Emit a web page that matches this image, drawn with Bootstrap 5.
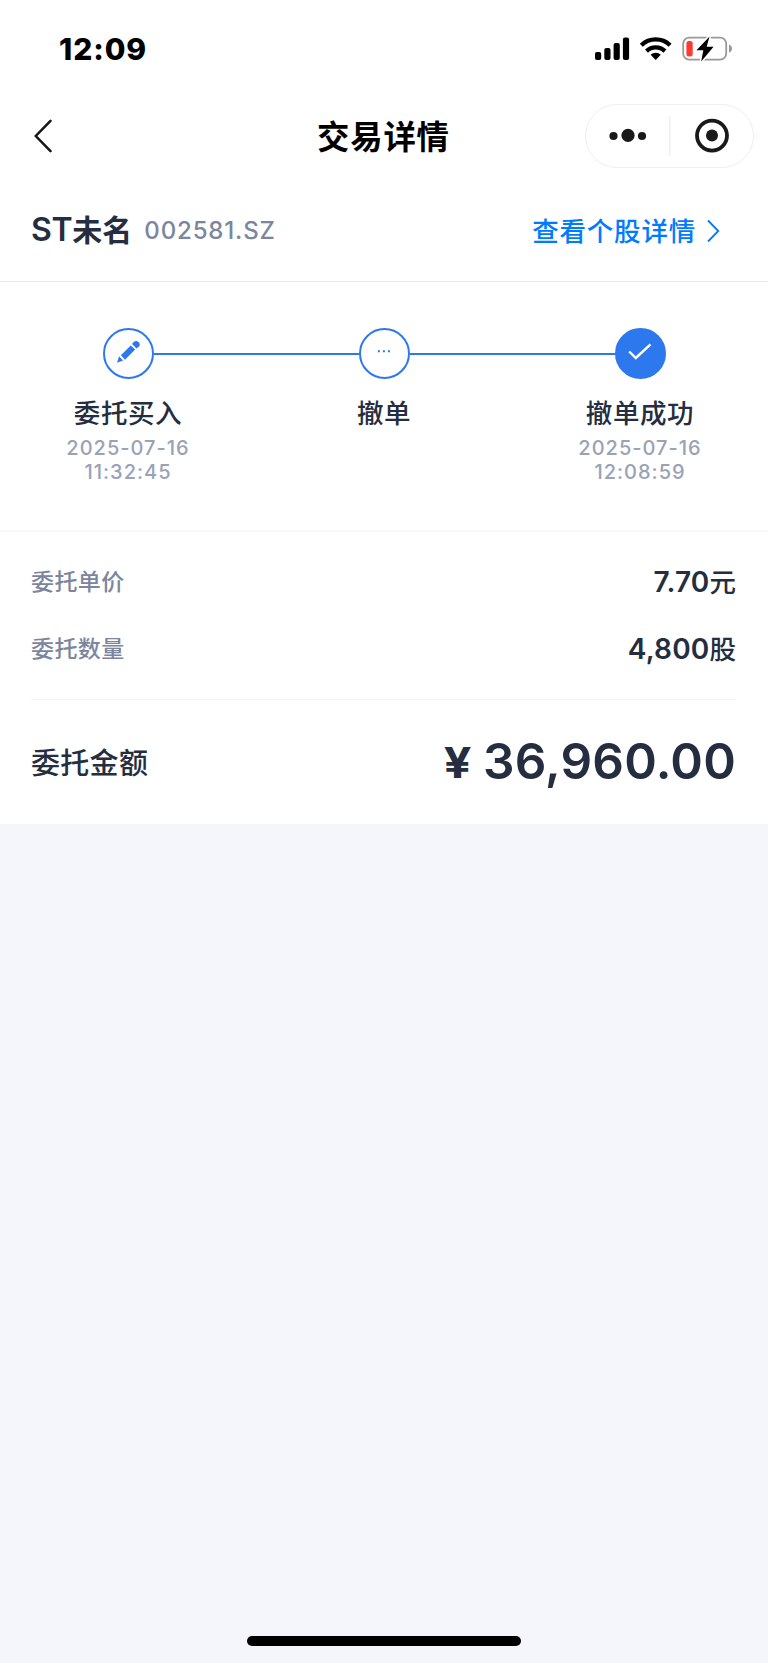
<!DOCTYPE html>
<html lang="zh-CN">
<head>
<meta charset="utf-8">
<meta name="viewport" content="width=device-width, initial-scale=1">
<title>交易详情</title>
<link href="https://cdn.jsdelivr.net/npm/bootstrap@5.3.0/dist/css/bootstrap.min.css" rel="stylesheet">
<style>
  :root { --ink: #252d40; --muted: #7b869e; --faint: #9aa2b6; --accent: #2e78ee; --link: #007aff; }
  body { font-family: Inter, "Noto Sans CJK SC", sans-serif; background: #f4f6fb; color: var(--ink); min-height: 1663px; }
  svg { display: block; flex: none; }
  .status-bar { height: 98px; padding: 0 35px 0 59px; color: #000; }
  .clock { font-size: 30px; font-weight: 800; line-height: 1; letter-spacing: .9px; }
  .title-bar { height: 76px; padding: 0 14px 0 34px; display: grid; grid-template-columns: 264px 1fr 264px; }
  .page-title { font-size: 32.4px; font-weight: 700; letter-spacing: .8px; color: #000; line-height: 1; padding: 5px 0 0 19px; }
  .capsule { width: 169px; height: 64px; border: 1px solid #efefef; border-radius: 32px; }
  .stock-row { height: 108px; padding: 5px 46px 0 31px; border-bottom: 1px solid #ebebeb; }
  .stock-name { font-size: 30px; font-weight: 600; line-height: 1; padding-bottom: 1px; }
  .stock-name .latin { font-size: 32px; letter-spacing: -.3px; }
  .stock-code { font-size: 24px; font-weight: 500; color: var(--muted); letter-spacing: .85px; line-height: 1; margin-left: 12px; padding-top: 1px; }
  .detail-link { font-size: 26.5px; font-weight: 500; color: var(--link); letter-spacing: .8px; line-height: 1; padding-top: 2px; }
  .steps { height: 250px; padding-top: 46px; border-bottom: 2px solid #f7f8fa; }
  .step-dot { width: 51px; height: 51px; border: 2px solid var(--accent); border-radius: 50%; flex: none; }
  .step-dot.done { background: var(--accent); }
  .rail { flex: 1; height: 2px; background: var(--accent); }
  .rail.off { background: transparent; }
  .step-name { font-size: 26.5px; font-weight: 500; letter-spacing: .6px; line-height: 36px; margin-top: 16px; }
  .step-time { font-size: 20px; font-weight: 500; color: var(--faint); letter-spacing: 1px; line-height: 24px; margin-top: 5px; }
  .info { padding: 16px 32px 0 31px; height: 292px; }
  .info-row { height: 67px; }
  .info-key { font-size: 23px; font-weight: 500; color: var(--muted); letter-spacing: .4px; padding-top: 1px; }
  .info-val { font-size: 28px; font-weight: 600; letter-spacing: .2px; }
  .unit { font-weight: 500; font-size: 26.5px; letter-spacing: 0; }
  .total-row { border-top: 1px solid #f1f3f8; height: 125px; margin-top: 17px; }
  .total-key { font-size: 29px; font-weight: 500; letter-spacing: .3px; line-height: 1; padding-top: 2px; }
  .total-val { font-size: 49.5px; font-weight: 600; line-height: 1; letter-spacing: .2px; padding-bottom: 1px; }
  .yen { display: inline-block; font-size: 43px; font-weight: 700; margin-right: 10px; transform: translate(-1px, -1px) scaleX(1.13); transform-origin: right; }
  .home-bar { width: 274px; height: 10px; border-radius: 5px; background: #000; margin: 0 0 17px 247px; }
</style>
</head>
<body class="d-flex flex-column">
<main class="bg-white">
  <div class="status-bar d-flex align-items-center justify-content-between">
    <span class="clock">12:09</span>
    <svg width="138" height="26" viewBox="0 0 138 26">
      <g>
        <rect x="0" y="16" width="6.2" height="8" rx="2"/><rect x="9.3" y="12" width="6.2" height="12" rx="2"/><rect x="18.6" y="7" width="6.2" height="17" rx="2"/><rect x="27.9" y="1.5" width="6.2" height="22.5" rx="2"/>
      </g>
      <g fill="none" stroke="#000" stroke-width="4.3">
        <path d="M46.3 9.2A20.8 20.8 0 0 1 75.1 9.2"/>
        <path d="M51.5 15.1A13.2 13.2 0 0 1 69.9 15.1"/>
      </g>
      <path d="M55.6 18.8A7.6 7.6 0 0 1 65.8 18.8L60.7 24Z"/>
      <rect x="88.2" y="1.7" width="43" height="22" rx="6" fill="none" stroke="#999" stroke-width="1.8"/>
      <path d="M134 8.5Q137 9.5 137 12.6T134 16.8Z" fill="#999"/>
      <rect x="91.4" y="5" width="6.3" height="15.6" rx="2.5" fill="#ff3a30"/>
      <path d="M114.5 .5L101.5 14.3H108.3L106.2 25.5L118.6 10.8H111.7Z" stroke="#fff" stroke-width="3" paint-order="stroke" stroke-linejoin="round"/>
    </svg>
  </div>
  <nav class="title-bar align-items-center">
    <svg width="18" height="34" viewBox="0 0 18 34" fill="none" stroke="#161616" stroke-width="2.5" stroke-linecap="round"><path d="M16.5 1.8L1.8 17L16.5 32.2"/></svg>
    <span class="page-title">交易详情</span>
    <div class="capsule ms-auto">
      <svg width="168" height="62" viewBox="0 0 168 62" fill="#191919">
        <circle cx="27.5" cy="31" r="4.1"/><circle cx="42" cy="30.4" r="6.6"/><circle cx="56" cy="31" r="4.1"/>
        <rect x="83.3" y="11" width="1" height="40" fill="#e8e8e8"/>
        <circle cx="126" cy="30.6" r="15" fill="none" stroke="#191919" stroke-width="3.8"/><circle cx="126" cy="30.6" r="6"/>
      </svg>
    </div>
  </nav>
  <section class="stock-row d-flex align-items-center justify-content-between">
    <div class="d-flex align-items-center"><span class="stock-name"><span class="latin">ST</span>未名</span><span class="stock-code">002581.SZ</span></div>
    <a href="#" class="detail-link d-flex align-items-center text-decoration-none">查看个股详情
      <svg class="ms-2" width="18" height="24" viewBox="0 0 18 24" fill="none" stroke="#007aff" stroke-width="1.8"><path d="M4 1.5L14.3 12L4 22.5"/></svg>
    </a>
  </section>
  <section class="steps row g-0 text-center">
    <div class="col-4">
      <div class="d-flex align-items-center">
        <div class="rail off"></div>
        <div class="step-dot"><svg width="47" height="47" viewBox="0 0 47 47" fill="#2e78ee"><path d="M12 32.7L14.1 26.2L18.1 30.6ZM15.9 25.2L25.7 15.4L30.2 19.6L20 29.7ZM27 13.9L29.2 11.6Q31.2 10 33.6 12.1Q35.8 14.5 34 16.5L31.6 18.6Z"/></svg></div>
        <div class="rail"></div>
      </div>
      <div class="step-name">委托买入</div>
      <div class="step-time">2025-07-16<br>11:32:45</div>
    </div>
    <div class="col-4">
      <div class="d-flex align-items-center">
        <div class="rail"></div>
        <div class="step-dot"><svg width="47" height="47" viewBox="0 0 47 47" fill="#2e78ee"><path d="M16.9 20.3h2v2h-2zM21.9 20.3h2v2h-2zM26.9 20.3h2v2h-2z"/></svg></div>
        <div class="rail"></div>
      </div>
      <div class="step-name">撤单</div>
    </div>
    <div class="col-4">
      <div class="d-flex align-items-center">
        <div class="rail"></div>
        <div class="step-dot done"><svg width="47" height="47" viewBox="0 0 47 47" fill="none" stroke="#fff" stroke-width="2.4"><path d="M12.2 21.5L18.8 28L33.5 14.3"/></svg></div>
        <div class="rail off"></div>
      </div>
      <div class="step-name">撤单成功</div>
      <div class="step-time">2025-07-16<br>12:08:59</div>
    </div>
  </section>
  <section class="info">
    <div class="info-row d-flex align-items-center justify-content-between"><span class="info-key">委托单价</span><span class="info-val">7.70<span class="unit">元</span></span></div>
    <div class="info-row d-flex align-items-center justify-content-between"><span class="info-key">委托数量</span><span class="info-val">4,800<span class="unit">股</span></span></div>
    <div class="total-row d-flex align-items-center justify-content-between"><span class="total-key">委托金额</span><span class="total-val"><span class="yen">¥</span>36,960.00</span></div>
  </section>
</main>
<div class="home-bar mt-auto"></div>
<script src="https://cdn.jsdelivr.net/npm/bootstrap@5.3.0/dist/js/bootstrap.bundle.min.js"></script>
</body>
</html>
